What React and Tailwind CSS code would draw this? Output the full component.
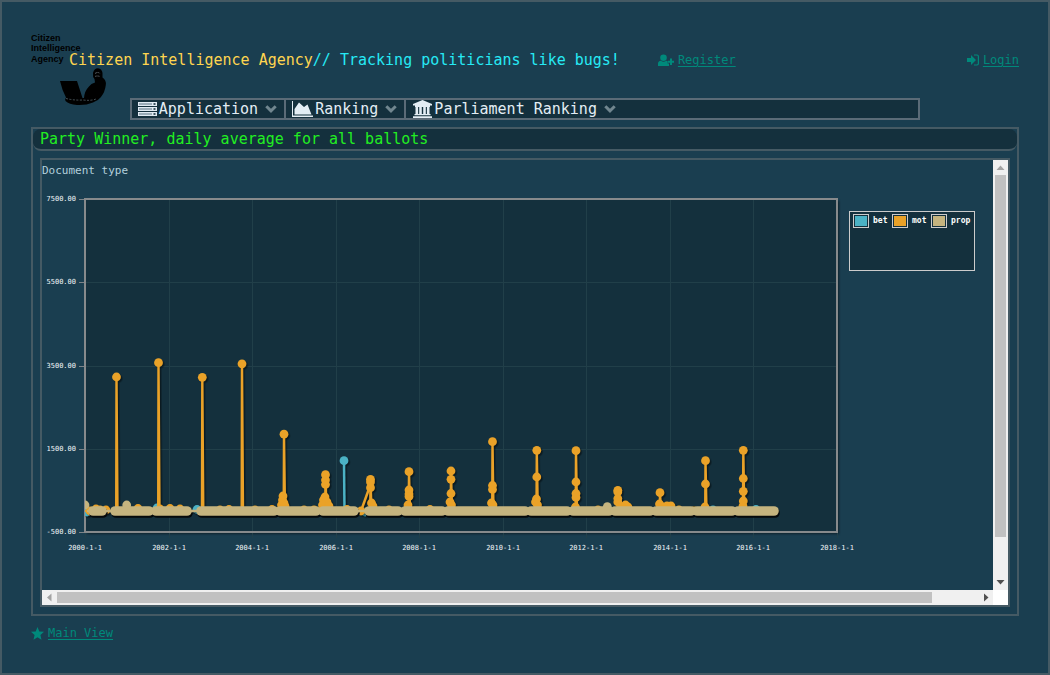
import React from 'react';

const ORANGE = '#eaa228';
const TEAL = '#4bb2c5';
const SAND = '#c5b47f';

const BASELINE = 511;

const xTicks = [
  [85, '2000-1-1'],
  [169, '2002-1-1'],
  [252, '2004-1-1'],
  [336, '2006-1-1'],
  [419, '2008-1-1'],
  [503, '2010-1-1'],
  [586, '2012-1-1'],
  [670, '2014-1-1'],
  [753, '2016-1-1'],
  [837, '2018-1-1'],
];

const yTicks = [
  [199, '7500.00'],
  [282, '5500.00'],
  [366, '3500.00'],
  [449, '1500.00'],
  [532, '-500.00'],
];

const motions = [
  { x: 116.5, ys: [377] },
  { x: 158.5, ys: [362.7] },
  { x: 202.3, ys: [377.3] },
  { x: 242, ys: [363.8] },
  { x: 284, ys: [434.2], low: [[283, 496], [282.5, 500], [284, 503], [281.5, 505], [285, 506]] },
  { x: 325.5, ys: [474.7, 480, 484.5], low: [[325, 497], [323.5, 500], [327, 502], [322.5, 505], [329, 506]] },
  { x: 370.5, ys: [479.3, 482, 487.7], low: [[371.5, 503], [373, 506]] },
  { x: 409, ys: [471.7, 490, 494, 496.5], low: [[408, 505]] },
  { x: 451, ys: [471, 479.3, 493.5], low: [[450, 502], [451.5, 505]] },
  { x: 492.5, ys: [441.7, 485.5, 489.5], low: [[491.5, 503], [493, 505]] },
  { x: 536.8, ys: [450.3, 477], low: [[536.5, 499], [535.5, 502], [537.5, 505]] },
  { x: 576, ys: [450.7, 482, 493.5, 497.5], low: [[575.5, 507]] },
  { x: 617.8, ys: [490.3, 492, 498.5, 502], low: [[625.5, 505], [628, 507], [622, 507]] },
  { x: 660, ys: [492.7], low: [[659.5, 504], [667, 506], [671, 506], [663, 507]] },
  { x: 705.5, ys: [460.7, 484], low: [[705, 507]] },
  { x: 743.3, ys: [450.3, 478.5, 491.3, 501], low: [[743, 506]] },
];

const smallMotions = [
  [90, 511], [96, 509], [100, 510], [106, 510], [138, 508.5], [160, 509], [170, 508.5], [180, 509],
  [220, 510], [229, 509.5], [255, 510], [272, 509.5], [304, 510], [314, 510], [347, 509.5], [361, 511],
  [389, 510], [430, 509.5], [598, 510], [679, 510], [694, 511],
];

const smallBets = [[87, 512], [157, 508], [197, 509.5], [365, 512], [713, 510], [756, 509.5]];

const sandSegments = [
  [93, 102], [115, 149], [156, 187], [201, 274], [280, 316], [323, 354], [369, 398], [405, 442],
  [448, 525], [531, 567], [573, 609], [615, 650], [656, 691], [697, 732], [738, 774],
];

function Dot({ x, y, fill }) {
  return <circle cx={x} cy={y} r="4.4" fill={fill} />;
}

function Chart() {
  return (
    <svg
      viewBox="42 180 807 410"
      className="h-[410px] w-[807px] shrink-0 overflow-visible font-[DejaVu_Sans_Mono,monospace]"
      role="img"
      aria-label="Ballots per document type, 2000 to 2018"
    >
      <defs>
        <filter id="soft" x="-10%" y="-10%" width="120%" height="120%" colorInterpolationFilters="sRGB">
          <feDropShadow dx="1.5" dy="1.5" stdDeviation="0.6" floodColor="#000" floodOpacity="0.45" />
        </filter>
        <filter id="frame" x="-10%" y="-10%" width="120%" height="120%" colorInterpolationFilters="sRGB">
          <feDropShadow dx="2" dy="2" stdDeviation="1.2" floodColor="#000" floodOpacity="0.45" />
        </filter>
        <clipPath id="plot">
          <rect x="85" y="199" width="752" height="333" />
        </clipPath>
      </defs>
      <rect x="85" y="199" width="752" height="333" fill="#14303d" filter="url(#frame)" />
      <g stroke="#213f49" shapeRendering="crispEdges">
        {xTicks.map(([x]) => <line key={x} x1={x + 0.5} x2={x + 0.5} y1="199" y2="538" />)}
        {yTicks.map(([y]) => <line key={y} x1="85" x2="837" y1={y + 0.5} y2={y + 0.5} />)}
      </g>
      <g stroke="#7c8388" shapeRendering="crispEdges">
        {yTicks.map(([y]) => <line key={y} x1="79" x2="85" y1={y + 0.5} y2={y + 0.5} />)}
      </g>
      <rect x="85" y="199" width="752" height="333" fill="none" stroke="#878a8c" strokeWidth="2" />
      <g clipPath="url(#plot)">
        <g filter="url(#soft)">
          <path d={`M344.5 ${BASELINE}L344 460.7`} stroke={TEAL} strokeWidth="2.5" />
          <Dot x={344} y={460.7} fill={TEAL} />
          {smallBets.map(([x, y]) => <Dot key={x} x={x} y={y} fill={TEAL} />)}
        </g>
        <g filter="url(#soft)">
          <path d={`M85 ${BASELINE}H774`} stroke={ORANGE} strokeWidth="2" />
          <path d="M361 511L370 486" stroke={ORANGE} strokeWidth="2.5" />
          {motions.map((m) => (
            <g key={m.x}>
              <path
                d={`M${m.x - 0.3} ${BASELINE}L${m.x} ${m.ys[0]}L${m.x + 1} ${BASELINE}`}
                fill={ORANGE}
                stroke={ORANGE}
                strokeWidth="2.4"
                strokeLinejoin="round"
              />
              {m.ys.map((y) => <Dot key={y} x={m.x} y={y} fill={ORANGE} />)}
              {(m.low || []).map(([x, y]) => <Dot key={`${x}-${y}`} x={x} y={y} fill={ORANGE} />)}
            </g>
          ))}
          {smallMotions.map(([x, y]) => <Dot key={x} x={x} y={y} fill={ORANGE} />)}
        </g>
        <g strokeLinecap="round" strokeWidth="9.6">
          {sandSegments.map(([a, b]) => (
            <line key={a} x1={a + 1} x2={b + 1} y1={BASELINE + 2} y2={BASELINE + 2} stroke="#05090b" />
          ))}
          <line x1="88" x2="774" y1={BASELINE} y2={BASELINE} stroke={SAND} strokeWidth="2.5" />
          {sandSegments.map(([a, b]) => (
            <line key={a} x1={a} x2={b} y1={BASELINE} y2={BASELINE} stroke={SAND} />
          ))}
        </g>
        <Dot x={85} y={505} fill={SAND} />
        <Dot x={126.7} y={505} fill={SAND} />
        <Dot x={607.3} y={506.7} fill={SAND} />
      </g>
      <g fill="#f2f6f8" fontSize="7">
        {yTicks.map(([y, t]) => <text key={t} x="76" y={y + 2} textAnchor="end">{t}</text>)}
        {xTicks.map(([x, t]) => <text key={t} x={x} y="550" textAnchor="middle">{t}</text>)}
      </g>
    </svg>
  );
}

function Legend() {
  const items = [
    ['bet', 'bg-[#4bb2c5]'],
    ['mot', 'bg-[#eaa228]'],
    ['prop', 'bg-[#c5b47f]'],
  ];
  return (
    <ul className="mt-[31px] grid h-[60px] w-[126px] shrink-0 grid-cols-[39px_39px_1fr] content-start border border-[#ccc] bg-[#14303d] px-[3px] py-[2px] text-[8px] leading-[14px] font-bold text-white">
      {items.map(([label, color]) => (
        <li key={label} className="flex items-center gap-1">
          <span className="h-[14px] w-4 shrink-0 border border-[#ccc] p-px">
            <span className={`block h-full w-full ${color}`} />
          </span>
          {label}
        </li>
      ))}
    </ul>
  );
}

function Logo() {
  return (
    <svg viewBox="31 31 78 76" className="absolute top-0 left-0 h-[76px] w-[78px]" role="img" aria-label="Citizen Intelligence Agency">
      <g fontFamily="Liberation Sans, sans-serif" fontWeight="bold" fontSize="9" fill="#000">
        <text x="31" y="41">Citizen</text>
        <text x="31" y="51">Intelligence</text>
        <text x="31" y="62">Agency</text>
      </g>
      <path d="M60 81H77L82.500 98L84 98Q84.500 91 89 86.500Q91 83.500 95 82.500L94.500 79Q92.500 77 93 73Q94 68.300 98 68.300Q102 69 102.500 73L102.500 77.500Q106.500 80 105.800 85Q105 92 101 97Q98 101 93 102.500Q86 105.500 77 105Q69 104.500 65.500 101Q64.500 99 66 97.500Q62 90 60 81Z" />
      <path d="M95 73.500q3-2 5 0M95 76.500q2-1 5 0" fill="none" stroke="#6b747a" strokeWidth=".8" strokeDasharray="2 .6" />
      <path d="M66 98.500q8 2 17 1.500q8 1 13-1" fill="none" stroke="#58656b" strokeWidth=".8" strokeDasharray="2 1.500" />
    </svg>
  );
}

function UserPlusIcon() {
  return (
    <svg viewBox="0 0 16 13" className="h-[13px] w-4" fill="currentColor" aria-hidden="true">
      <circle cx="5.5" cy="3.8" r="3.3" />
      <path d="M0 12V9.6Q0 7 2.8 6.7Q5.5 8.7 8.2 6.7Q9.3 6.8 9.7 7.3V9.6H11V12Z" />
      <path d="M12 4.6h2v2.2h2v2h-2V11h-2V8.8h-2v-2h2z" />
    </svg>
  );
}

function SignInIcon() {
  return (
    <svg viewBox="0 0 12 12" className="h-3 w-3" aria-hidden="true">
      <path d="M0 4h4V1l5 5-5 5V8H0z" fill="currentColor" />
      <path d="M7 1h3q1.4 0 1.4 1.4v7.2Q11.4 11 10 11H7" fill="none" stroke="currentColor" strokeWidth="1.2" />
    </svg>
  );
}

function StarIcon() {
  return (
    <svg viewBox="0 0 13 13" className="h-[13px] w-[13px]" fill="currentColor" aria-hidden="true">
      <path d="M6.5 0L8.300 4.400L13 4.800L9.400 8L10.500 12.800L6.500 10.200L2.500 12.800L3.600 8L0 4.800L4.700 4.400Z" />
    </svg>
  );
}

function ServerIcon() {
  return (
    <svg viewBox="0 0 19 15" className="h-[15px] w-[19px]" aria-hidden="true">
      {[0, 5, 10].map((y) => (
        <g key={y}>
          <rect x="0" y={y} width="19" height="4" fill="#e0eaf2" />
          <rect x="1" y={y + 1.2} width="13" height="1.6" fill="#8b9daa" />
          <rect x="15.5" y={y + 1.2} width="2" height="1.6" fill="#14303d" />
        </g>
      ))}
    </svg>
  );
}

function AreaIcon() {
  return (
    <svg viewBox="0 0 21 16" className="h-4 w-[21px]" fill="currentColor" aria-hidden="true">
      <path d="M0 0h1v14.6H21V16H0z" />
      <path d="M2.500 13.500V8L7 1.500L12 6L15.500 3.500L19.500 13.500z" />
    </svg>
  );
}

function InstitutionIcon() {
  return (
    <svg viewBox="0 0 19 18" className="ml-px h-[18px] w-[19px]" fill="currentColor" aria-hidden="true">
      <path d="M9.500 0L19 4v1.500H0V4zM2 5.500h15V7H2zM2.500 7h2.600v7.500H2.500zM6.200 7h2.600v7.500H6.200zM10.200 7h2.600v7.500h-2.600zM13.900 7h2.600v7.500h-2.600zM1.500 14h16v1.300h-16zM0 16.200h19V18H0z" />
    </svg>
  );
}

function Chevron() {
  return (
    <svg viewBox="0 0 12 8" className="ml-[7px] h-2 w-3 text-[#71868f]" aria-hidden="true">
      <path d="M1.300 1.300L6 5.900L10.700 1.300" fill="none" stroke="currentColor" strokeWidth="3" />
    </svg>
  );
}

function MenuItem({ icon, label, last }) {
  return (
    <button
      type="button"
      className={`flex h-[18px] items-center pr-[7px] pl-[6px] text-[15px] leading-[18px] whitespace-nowrap text-[#e3edf4] ${last ? '' : 'border-r-2 border-[#5b6b77]'}`}
    >
      {icon}
      <span className="ml-[2px]">{label}</span>
      <Chevron />
    </button>
  );
}

const arrowShapes = {
  up: 'M3.5 10L7.5 5.500L11.5 10Z',
  down: 'M3.5 5L7.5 9.500L11.5 5Z',
  left: 'M9.500 3.500L5 7.500L9.500 11.500Z',
  right: 'M6 3.500L10.500 7.500L6 11.500Z',
};

function ScrollArrow({ dir, dim }) {
  return (
    <button type="button" aria-label={`Scroll ${dir}`} className="h-[15px] w-[15px] shrink-0">
      <svg viewBox="0 0 15 15" className={`h-[15px] w-[15px] ${dim ? 'text-[#a3a3a3]' : 'text-[#505050]'}`}>
        <path d={arrowShapes[dir]} fill="currentColor" />
      </svg>
    </button>
  );
}

function TextLink({ icon, children }) {
  return (
    <a href="#" className="flex items-center gap-1 text-[12px] leading-4 whitespace-nowrap text-[#00897b]">
      {icon}
      <span className="underline underline-offset-2">{children}</span>
    </a>
  );
}

export default function App() {
  return (
    <div className="flex min-h-screen flex-col border-2 border-[#455a64] bg-[#1a3e50] p-[29px] font-[DejaVu_Sans_Mono,monospace]">
      <header className="relative flex h-[58px] items-center pl-[38px]">
        <Logo />
        <h1 className="relative text-[15px] leading-[20px] whitespace-nowrap text-[#ffd54f]">
          Citizen Intelligence Agency<span className="text-[#26eaf5]">// Tracking politicians like bugs!</span>
        </h1>
        <div className="ml-[38px] flex flex-1 items-center justify-between">
          <TextLink icon={<UserPlusIcon />}>Register</TextLink>
          <TextLink icon={<SignInIcon />}>Login</TextLink>
        </div>
      </header>

      <nav className="mt-[9px] ml-[10%] flex w-4/5 border-2 border-[#5b6b77] bg-[#14303d]">
        <MenuItem icon={<ServerIcon />} label="Application" />
        <MenuItem icon={<AreaIcon />} label="Ranking" />
        <MenuItem icon={<InstitutionIcon />} label="Parliament Ranking" last />
      </nav>

      <main className="mt-[7px] border-2 border-[#455a64]">
        <h2 className="rounded-lg border-b-2 border-[#455a64] bg-[#14303d] pl-[7px] text-[15px] leading-[20px] text-[#22ee22]">
          Party Winner, daily average for all ballots
        </h2>
        <section className="m-[7px] grid grid-cols-[minmax(0,1fr)_15px] border-2 border-[#455a64]">
          <div className="overflow-hidden">
            <h3 className="h-5 text-[11px] leading-[22px] text-[#b4d0dc]">Document type</h3>
            <div className="flex">
              <Chart />
              <Legend />
            </div>
          </div>
          <div className="flex flex-col items-center bg-[#f0f0f0]">
            <ScrollArrow dir="up" dim />
            <div className="w-[11px] flex-1">
              <div className="h-[90.5%] bg-[#c1c1c1]" />
            </div>
            <ScrollArrow dir="down" />
          </div>
          <div className="flex items-center bg-[#f0f0f0]">
            <ScrollArrow dir="left" dim />
            <div className="h-[11px] flex-1">
              <div className="h-full w-[95%] bg-[#c1c1c1]" />
            </div>
            <ScrollArrow dir="right" />
          </div>
          <div className="bg-white" />
        </section>
      </main>

      <footer className="mt-[9px] flex">
        <TextLink icon={<StarIcon />}>Main View</TextLink>
      </footer>
    </div>
  );
}
